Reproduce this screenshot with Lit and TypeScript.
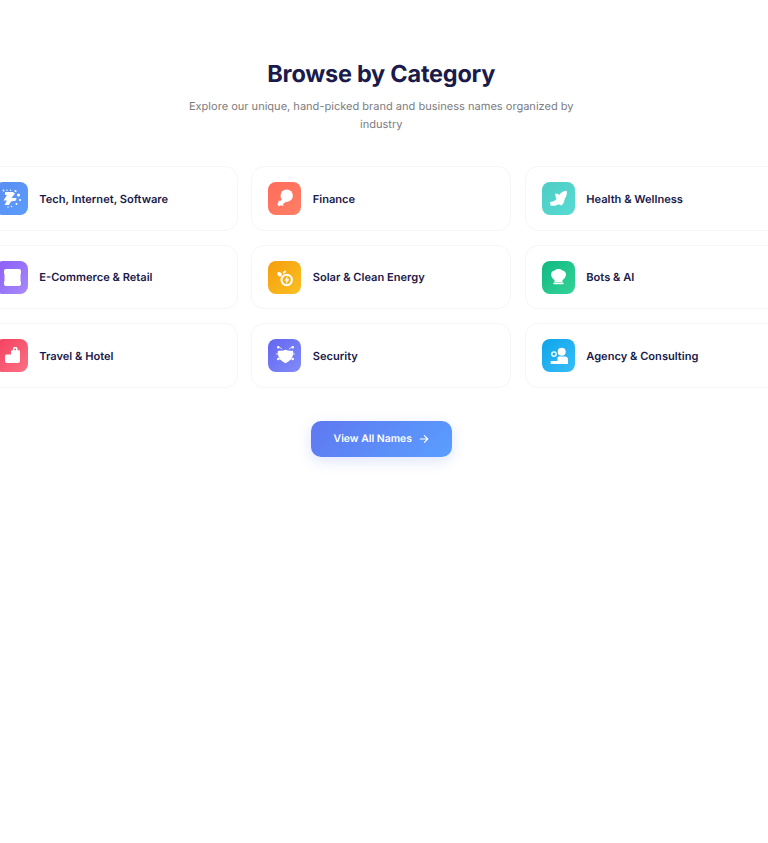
import { LitElement, html, css, svg } from "lit";
import { customElement } from "lit/decorators.js";

const icons = {
  tech: svg`<path d="M10 10h8l2 1.500-3.500 4.500h5l-.5 2.500-5 1-2 3.500H9.500l2.500-4.500H8.500l3.500-5.500H10z"/><circle cx="8.500" cy="8.500" r=".9"/><circle cx="12" cy="8.200" r=".7"/><circle cx="15.500" cy="8.200" r=".7"/><circle cx="20.500" cy="9" r="1.100"/><circle cx="23.500" cy="13" r="1.500"/><circle cx="25" cy="18" r="1.100"/><circle cx="21.500" cy="22" r="1"/><circle cx="16.500" cy="24.500" r=".8"/><circle cx="13" cy="25" r=".7"/>`,
  finance: svg`<circle cx="18.700" cy="13.700" r="6.200"/><path d="M15 16.500l3.200 3.200-3 2 .2 2.300-2.400-.8-2.300 1.200-.6-1.300-.9-1.200 1.500-1.800-.2-1.700 1.600.5z"/>`,
  health: svg`<path d="M8 20c2.500 0 5-1 6.500-3-1-2-1.500-4-1-5.500 1.500 0 3 .5 4 1.500 1-2.500 4-4.300 7.200-4.300.6 2.800-.2 5.800-1.900 7.800-.3 3-1.300 5-3.100 7l-3.200-1.200c-3 1.700-6 1.700-8 1.200z"/>`,
  store: svg`<path d="M11 8h13c1.200 0 2 .8 2 2v2c0 .7-.2 1.100-.5 1.500V20c.3.4.5.8.5 1.500V23c0 1.200-.8 2-2 2H11c-1.200 0-2-.8-2-2v-1.500c0-.7.2-1.100.5-1.500v-6.500c-.3-.4-.5-.8-.5-1.500v-2c0-1.200.8-2 2-2z"/>`,
  solar: svg`<circle cx="18.700" cy="19" r="5.200" fill="none" stroke="#fff" stroke-width="2"/><path d="M19.800 14.800l-3.300 5h2l-.7 3.600 3.500-5.200h-2.100z"/><ellipse cx="11.500" cy="13.200" rx="2.500" ry="2" transform="rotate(35 11.500 13.200)"/><path d="M14.500 12.500c.4-1.800 1.800-3 3.700-3 .1 1.900-1.400 3.200-3.700 3z"/>`,
  bot: svg`<path d="M16.500 8c2 0 3.200.7 4 1.500 2 .3 3.500 2 3.500 4 0 2.200-1.500 4.300-3.500 5.500v2h-8v-2C10.500 17.800 9 15.700 9 13.500c0-2 1.500-3.700 3.500-4 .8-.8 2-1.500 4-1.500z"/><rect x="11.300" y="21.500" width="10.400" height="1.700" rx=".8"/>`,
  bag: svg`<path fill-rule="evenodd" d="M10 17c0-1 .8-1.500 1.500-1.500H16v-3c0-.8.5-1.300 1.200-1.300h.8V9.500c0-1 .8-1.500 1.700-1.500h1.100c1 0 1.700.5 1.700 1.500v1.700h1.200c.8 0 1.300.5 1.300 1.300V22c0 1.200-.8 2-2 2H12c-1.200 0-2-.8-2-2zM19.500 9.500v1.700H21V9.500z"/>`,
  security: svg`<path d="M11 11.800c2.500.2 4.700-.2 6.500-1 1.800.8 4 1.200 6.500 1 .8 0 1.300.6 1.300 1.400 0 5-2.800 8.800-7.800 11-5-2.200-7.800-6-7.800-11 0-.8.500-1.400 1.300-1.400z"/><path d="M11.500 8.300l2.500 1.700M23.500 8.300l-2.500 1.700M8 15h2M27 15h-2M11.500 20h1.500M21.500 20h1.500" stroke="#fff" stroke-width=".8" fill="none"/><circle cx="10.300" cy="8.300" r="1.300"/><circle cx="24.700" cy="8.300" r="1.300"/><circle cx="10.300" cy="20" r="1.300"/><circle cx="24.700" cy="20" r="1.300"/>`,
  agency: svg`<circle cx="19.700" cy="12.700" r="4"/><path d="M15.500 19c0-1 .8-1.500 1.700-1.500h5.600c1.700 0 3.200 1.300 3.200 3V25H8.700v-3h6.800z"/><circle cx="12" cy="15" r="2.200" fill="none" stroke="#fff" stroke-width="1.300"/>`,
};

const categories: { name: string; icon: keyof typeof icons; bg: string }[] = [
  { name: "Tech, Internet, Software", icon: "tech", bg: "linear-gradient(135deg,#5b8def,#5a9cff)" },
  { name: "Finance", icon: "finance", bg: "linear-gradient(135deg,#ff6b5b,#ff8066)" },
  { name: "Health & Wellness", icon: "health", bg: "linear-gradient(135deg,#4ecdc4,#56dbd3)" },
  { name: "E-Commerce & Retail", icon: "store", bg: "linear-gradient(135deg,#8b5cf6,#a78bfa)" },
  { name: "Solar & Clean Energy", icon: "solar", bg: "linear-gradient(135deg,#f59e0b,#fbbf24)" },
  { name: "Bots & AI", icon: "bot", bg: "linear-gradient(135deg,#10b981,#34d399)" },
  { name: "Travel & Hotel", icon: "bag", bg: "linear-gradient(135deg,#f43f5e,#fb7185)" },
  { name: "Security", icon: "security", bg: "linear-gradient(135deg,#6366f1,#818cf8)" },
  { name: "Agency & Consulting", icon: "agency", bg: "linear-gradient(135deg,#0ea5e9,#38bdf8)" },
];

@customElement("app-root")
export class AppRoot extends LitElement {
  static styles = css`
    :host {
      display: block;
      height: 843px;
      overflow: hidden;
      background: #fff;
      font-family: Inter, "Liberation Sans", sans-serif;
      text-rendering: geometricPrecision;
    }
    .section {
      width: 762.500px;
      padding-top: 59px;
      display: flex;
      flex-direction: column;
      align-items: center;
    }
    h2 {
      margin: 0;
      font-size: 23.500px;
      line-height: 30px;
      font-weight: 700;
      color: #1a1a4b;
      letter-spacing: -0.24px;
    }
    p {
      margin: 9px 0 0;
      width: 420px;
      text-align: center;
      font-size: 11.050px;
      line-height: 17.500px;
      color: #7c7c80;
    }
    .grid {
      margin-top: 33px;
      width: 100%;
      display: grid;
      grid-template-columns: repeat(3, 260px);
      justify-content: center;
      gap: 14px 13.500px;
    }
    .card {
      box-sizing: border-box;
      height: 64.500px;
      display: flex;
      align-items: center;
      gap: 11.500px;
      padding: 1px 16px 0;
      background: #fff;
      border: 1px solid #f6f6f8;
      border-radius: 13px;
    }
    .icon {
      flex: none;
      width: 33px;
      height: 33px;
      border-radius: 8px;
    }
    .icon svg {
      display: block;
      width: 33px;
      height: 33px;
      fill: #fff;
    }
    .name {
      font-size: 11.100px;
      font-weight: 600;
      color: #1a1a4b;
    }
    .btn {
      margin-top: 33.500px;
      box-sizing: border-box;
      width: 141px;
      height: 35.500px;
      display: flex;
      align-items: center;
      justify-content: center;
      gap: 7px;
      border: 0;
      border-radius: 10px;
      background: linear-gradient(135deg, #5f78f0, #5a9eff);
      box-shadow: 0 4px 14px rgba(91, 120, 240, 0.2);
      color: #fff;
      font: 600 10.400px Inter, "Liberation Sans", sans-serif;
      text-rendering: geometricPrecision;
    }
    .btn svg {
      width: 10px;
      height: 10px;
      fill: none;
      stroke: #fff;
      stroke-width: 1.300;
      stroke-linecap: round;
      stroke-linejoin: round;
    }
  `;

  render() {
    return html`
      <section class="section">
        <h2>Browse by Category</h2>
        <p>Explore our unique, hand-picked brand and business names organized by industry</p>
        <div class="grid">
          ${categories.map(
            (c) => html`
              <div class="card">
                <div class="icon" style="background:${c.bg}">
                  <svg viewBox="0 0 33 33">${icons[c.icon]}</svg>
                </div>
                <span class="name">${c.name}</span>
              </div>
            `
          )}
        </div>
        <button class="btn">
          View All Names
          <svg viewBox="0 0 12 12"><path d="M1.500 6h9M6.500 2l4 4-4 4" /></svg>
        </button>
      </section>
    `;
  }
}
